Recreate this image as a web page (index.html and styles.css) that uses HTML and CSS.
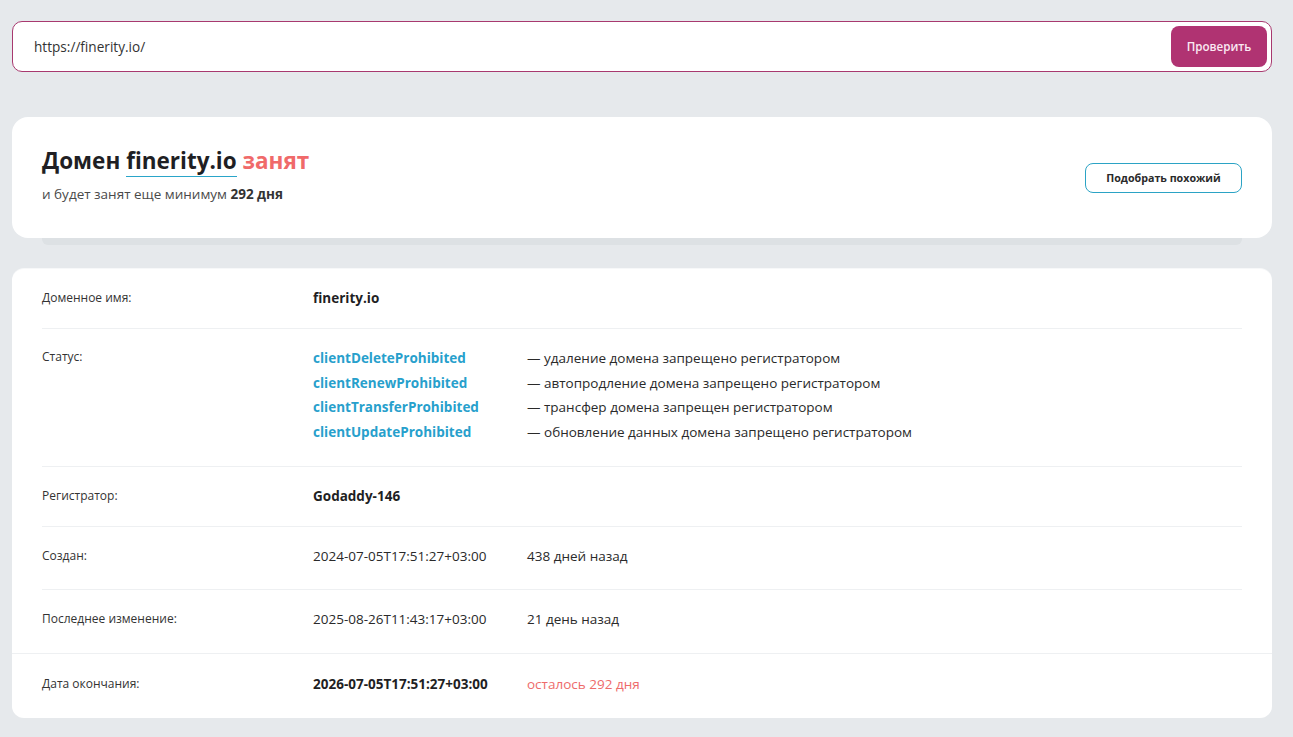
FILE: index.html
```html
<!DOCTYPE html>
<html lang="ru">
<head>
    <meta charset="UTF-8">
    <meta name="viewport" content="width=device-width, initial-scale=1.0">
    <title>Whois finerity.io</title>
    <link rel="stylesheet" href="styles.css">
</head>
<body>

    <div class="page">
        <!-- Поиск домена -->
        <form class="search">
            <input type="text" class="search-input" value="https://finerity.io/">
            <button type="button" class="search-btn">Проверить</button>
        </form>

        <!-- Статус домена -->
        <div class="summary-wrap">
            <div class="summary">
                <div class="summary-text">
                    <h1>Домен <span class="domain">finerity.io</span> <span class="busy">занят</span></h1>
                    <p>и будет занят еще минимум <strong>292 дня</strong></p>
                </div>
                <button type="button" class="similar-btn">Подобрать похожий</button>
            </div>
            <div class="summary-shadow"></div>
        </div>

        <!-- Данные whois -->
        <div class="details">
            <div class="row">
                <div class="label">Доменное имя:</div>
                <div class="value bold">finerity.io</div>
            </div>
            <div class="row row-status">
                <div class="label">Статус:</div>
                <div class="status-list">
                    <div class="status"><span class="code">clientDeleteProhibited</span><span>— удаление домена запрещено регистратором</span></div>
                    <div class="status"><span class="code">clientRenewProhibited</span><span>— автопродление домена запрещено регистратором</span></div>
                    <div class="status"><span class="code">clientTransferProhibited</span><span>— трансфер домена запрещен регистратором</span></div>
                    <div class="status"><span class="code">clientUpdateProhibited</span><span>— обновление данных домена запрещено регистратором</span></div>
                </div>
            </div>
            <div class="row">
                <div class="label">Регистратор:</div>
                <div class="value bold">Godaddy-146</div>
            </div>
            <div class="row row-tall">
                <div class="label">Создан:</div>
                <div class="value">2024-07-05T17:51:27+03:00</div>
                <div class="note">438 дней назад</div>
            </div>
            <div class="row row-tall">
                <div class="label">Последнее изменение:</div>
                <div class="value">2025-08-26T11:43:17+03:00</div>
                <div class="note">21 день назад</div>
            </div>
            <div class="row row-last">
                <div class="label">Дата окончания:</div>
                <div class="value bold">2026-07-05T17:51:27+03:00</div>
                <div class="note red">осталось 292 дня</div>
            </div>
        </div>
    </div>

</body>
</html>
```

FILE: styles.css
```css
/* Общие настройки */
body {
    margin: 0;
    background-color: #e6e9ec;
    font-family: "Open Sans", Arial, sans-serif;
    color: #222;
}

.page {
    padding: 21px 21px 19px 12px;
}

/* Строка поиска */
.search {
    display: flex;
    align-items: center;
    height: 51px;
    box-sizing: border-box;
    background-color: white;
    border: 1px solid #a8396f;
    border-radius: 10px;
    padding: 0 4px 0 21px;
}

.search-input {
    flex: 1;
    border: none;
    outline: none;
    font-family: inherit;
    font-size: 13.6px;
    color: #333;
    padding: 0;
    background: transparent;
}

.search-btn {
    width: 96px;
    height: 41px;
    border: none;
    border-radius: 8px;
    background-color: #b03372;
    color: #fbe9f2;
    font-family: inherit;
    font-size: 11.6px;
    font-weight: 600;
    cursor: pointer;
}

/* Блок статуса */
.summary-wrap {
    margin-top: 45px;
}

.summary {
    display: flex;
    align-items: center;
    justify-content: space-between;
    height: 121px;
    box-sizing: border-box;
    background-color: white;
    border-radius: 16px;
    padding: 0 30px 0 30px;
}

.summary-text {
    margin-top: -7px;
}

h1 {
    margin: 0;
    font-size: 22.5px;
    line-height: 30px;
    font-weight: 700;
    color: #1f1f24;
}

.domain {
    border-bottom: 1px solid #2aa5c9;
}

.busy {
    color: #f06a6a;
}

.summary-text p {
    margin: 9px 0 0;
    font-size: 13.5px;
    color: #4a4a4a;
}

.summary-text strong {
    color: #333;
    font-weight: 700;
}

.similar-btn {
    width: 157px;
    height: 30px;
    margin-top: 1px;
    background-color: white;
    border: 1px solid #2ba3c5;
    border-radius: 8px;
    font-family: inherit;
    font-size: 10.7px;
    font-weight: 700;
    color: #2a2a2a;
    cursor: pointer;
}

.summary-shadow {
    height: 7px;
    margin: 0 30px;
    background-color: #dde1e4;
    border-radius: 0 0 6px 6px;
}

/* Таблица данных */
.details {
    margin-top: 24px;
    background-color: white;
    box-shadow: 0 -1px 0 #f7f8f9;
    border-radius: 12px;
    padding: 0 30px;
}

.row {
    display: flex;
    align-items: flex-start;
    padding: 19px 0 20px;
    line-height: 20px;
    border-bottom: 1px solid #eef0f2;
}

.row-status {
    padding: 17px 0 21px;
}

.row-status .label {
    padding-top: 1px;
}

.row-tall {
    padding: 19px 0 23.5px;
}

.row-last {
    border-bottom: none;
    border-top: 1px solid #eef0f2;
    margin: -1px -30px 0;
    padding: 20px 30px 24px;
}

.label {
    width: 271px;
    flex-shrink: 0;
    font-size: 12px;
    color: #333;
}

.value {
    width: 214px;
    flex-shrink: 0;
    font-size: 13.5px;
    color: #2a2a2a;
}

.bold {
    font-weight: 700;
    color: #1f1f24;
}

.note {
    font-size: 13.5px;
    color: #2a2a2a;
}

.red {
    color: #ee6b6b;
}

.status {
    display: flex;
    line-height: 24.7px;
    font-size: 13.5px;
    color: #2a2a2a;
}

.code {
    width: 214px;
    flex-shrink: 0;
    font-weight: 700;
    color: #27a0cc;
}
```
